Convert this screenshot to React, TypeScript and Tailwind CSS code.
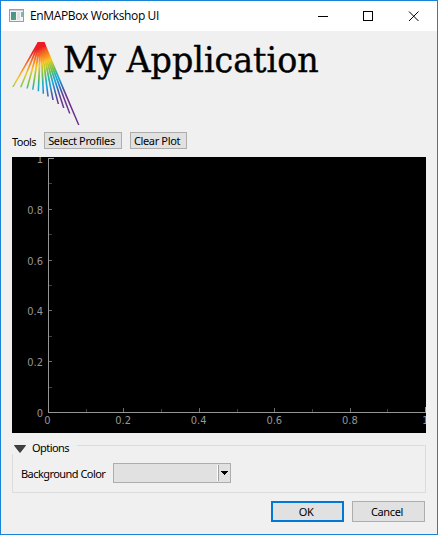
import React from "react";

const UI = "font-['Noto_Sans','Open_Sans',sans-serif] tracking-[-0.55px]";

const rays = [
  [12.8, 87], [20.7, 87.3], [27, 88.5], [32.7, 89.7], [38.3, 91.3], [43.3, 93.7],
  [48, 96.5], [53, 100], [58.3, 104], [63.7, 108], [69.7, 113.5], [78.7, 125],
];

function Logo() {
  return (
    <svg className="h-[84px] w-[68px] shrink-0" viewBox="12 41 68 84">
      <defs>
        <linearGradient id="spectrum" gradientUnits="userSpaceOnUse" x1="41" y1="42" x2="86" y2="120.3">
          <stop offset="0.05" stopColor="#ed1c24" />
          <stop offset="0.1" stopColor="#f15a24" />
          <stop offset="0.17" stopColor="#fb961c" />
          <stop offset="0.22" stopColor="#f7c61c" />
          <stop offset="0.26" stopColor="#b8ca35" />
          <stop offset="0.33" stopColor="#6fbf4b" />
          <stop offset="0.39" stopColor="#22b5b0" />
          <stop offset="0.46" stopColor="#1c9fe0" />
          <stop offset="0.56" stopColor="#3b5fb0" />
          <stop offset="0.64" stopColor="#6a3591" />
          <stop offset="1" stopColor="#6a2c8c" />
        </linearGradient>
      </defs>
      {rays.map(([x, y], i) => {
        const t = 38.8 + i * 0.42;
        return (
          <polygon key={i} fill="url(#spectrum)" points={`${t - 1.1},42 ${t + 1.1},42 ${x + 0.8},${y} ${x - 0.7},${y}`} />
        );
      })}
      <polygon points="38.5,42 43.5,42 46,47 36,47" fill="#ed1c24" />
    </svg>
  );
}

function TitleBar() {
  return (
    <div className="flex h-[30px] shrink-0 items-center bg-white pl-2">
      <svg className="h-[14px] w-4" viewBox="0 0 16 14" shapeRendering="crispEdges">
        <defs>
          <linearGradient id="pane" x1="0" y1="0" x2="1" y2="1">
            <stop offset="0" stopColor="#4b8a9e" />
            <stop offset="1" stopColor="#4fa276" />
          </linearGradient>
        </defs>
        <rect x="0.5" y="0.5" width="14" height="12" fill="#f4f4f4" stroke="#9a9da1" />
        <rect x="1" y="1" width="13" height="1" fill="#c9ccd0" />
        <rect x="2" y="3" width="5" height="8" fill="url(#pane)" />
        <rect x="8" y="3" width="3" height="8" fill="#dfe2e4" />
        <rect x="12" y="3" width="2" height="5" fill="#83b7ae" />
      </svg>
      <span className="ml-[5px] font-['Open_Sans','Noto_Sans',sans-serif] text-[12px] leading-[16px] tracking-[-0.37px] whitespace-nowrap text-black">
        EnMAPBox Workshop UI
      </span>
      <svg className="mr-[17px] ml-auto h-[11px] w-[102px]" viewBox="0 0 102 11" fill="none" stroke="#000">
        <path d="M0 5.5H10" />
        <rect x="45.5" y="0.5" width="9" height="9" />
        <path d="M91 0.5L100.5 10M100.5 0.5L91 10" />
      </svg>
    </div>
  );
}

function Plot() {
  const steps = [0, 1, 2, 3, 4, 5, 6, 7, 8, 9, 10];
  const labels = ["0", "0.2", "0.4", "0.6", "0.8", "1"];
  return (
    <svg
      className="mt-2 block h-[276px] w-[414px] shrink-0 overflow-hidden bg-black font-['DejaVu_Sans_Condensed','DejaVu_Sans',sans-serif] text-[11px] tracking-normal"
      viewBox="0 0 414 276"
      fill="#969696"
    >
      <g shapeRendering="crispEdges">
        <rect x="36" y="1" width="1" height="255" />
        <rect x="36" y="255" width="378" height="1" />
        <rect x="36" y="1" width="6" height="1" />
        <rect x="413" y="250" width="1" height="6" />
        {steps.slice(1, 10).map((i) => (
          <React.Fragment key={i}>
            <rect x={Math.round(36 + i * 37.7)} y={i % 2 ? 252 : 251} width="1" height={i % 2 ? 3 : 4} fill={i % 2 ? "#414141" : "#6a6a6a"} />
            <rect x="37" y={Math.round(255 - i * 25.4)} width="3" height="1" fill={i % 2 ? "#414141" : "#6a6a6a"} />
          </React.Fragment>
        ))}
      </g>
      {labels.map((l, i) => (
        <React.Fragment key={l}>
          <text x={i === 0 ? 35.5 : 35.5 + i * 75.6} y="267" textAnchor="middle">{l}</text>
          <text x="31" y={i === 5 ? 6 : 260 - i * 50.8} textAnchor="end">{l}</text>
        </React.Fragment>
      ))}
    </svg>
  );
}

function Button({ label, className }: { label: string; className: string }) {
  return (
    <button className={`flex items-center justify-center bg-[#e1e1e1] pr-[3px] tracking-[-0.35px] whitespace-nowrap ${className}`}>{label}</button>
  );
}

export default function App() {
  return (
    <div className={`flex h-[535px] w-[438px] flex-col border border-[#1883d7] bg-[#f0f0f0] text-[11px] leading-[13px] text-black ${UI}`}>
      <TitleBar />
      <div className="flex flex-1 flex-col px-[11px] pt-[10px]">
        <header className="flex h-[84px] shrink-0">
          <Logo />
          <h1 className="-ml-[17px] origin-left scale-x-[1.029] font-['DejaVu_Serif_Condensed','DejaVu_Serif',serif] text-[36px] leading-[38px] tracking-normal whitespace-nowrap [-webkit-text-stroke:0.4px_black]">
            My Application
          </h1>
        </header>
        <div className="mt-[7px] flex h-[17px] shrink-0">
          <span className="w-8 pt-[3px]">Tools</span>
          <Button label="Select Profiles" className="h-[17px] w-[78px] border border-[#adadad]" />
          <Button label="Clear Plot" className="ml-2 h-[17px] w-[57px] border border-[#adadad]" />
        </div>
        <Plot />
        <section className="mt-3 grid h-12 shrink-0">
          <div className="col-start-1 row-start-1 flex flex-col">
            <div className="ml-[65px] h-[9px] border-t border-r border-[#dcdcdc]" />
            <div className="flex flex-1 items-center border-x border-b border-[#dcdcdc] pl-2">
              <span className="w-[92px] whitespace-nowrap">Background Color</span>
              <div className="flex h-5 w-[118px] items-center justify-end border border-[#adadad] bg-[#e1e1e1] pr-[2px]">
                <div className="mr-[2px] h-4 w-[2px] border-r border-l border-r-[#a0a0a0] border-l-white" />
                <svg className="h-1 w-[7px]" viewBox="0 0 7 4" shapeRendering="crispEdges">
                  <path d="M0 0H7V1H6V2H5V3H4V4H3V3H2V2H1V1H0Z" />
                </svg>
              </div>
            </div>
          </div>
          <div className="col-start-1 row-start-1 -mt-[4px] flex h-[13px] items-center pl-[2px]">
            <svg className="mt-[2px] h-2 w-3" viewBox="0 0 12 8">
              <path d="M0.5 0.5H11.5L6 7.5Z" fill="#404244" stroke="#202224" strokeWidth="0.8" />
            </svg>
            <span className="ml-[6px]">Options</span>
          </div>
        </section>
        <footer className="mt-2 flex justify-end gap-2 pr-px">
          <Button label="OK" className="h-[21px] w-[73px] border-2 border-[#0078d7]" />
          <Button label="Cancel" className="h-[21px] w-[73px] border border-[#adadad]" />
        </footer>
      </div>
    </div>
  );
}
